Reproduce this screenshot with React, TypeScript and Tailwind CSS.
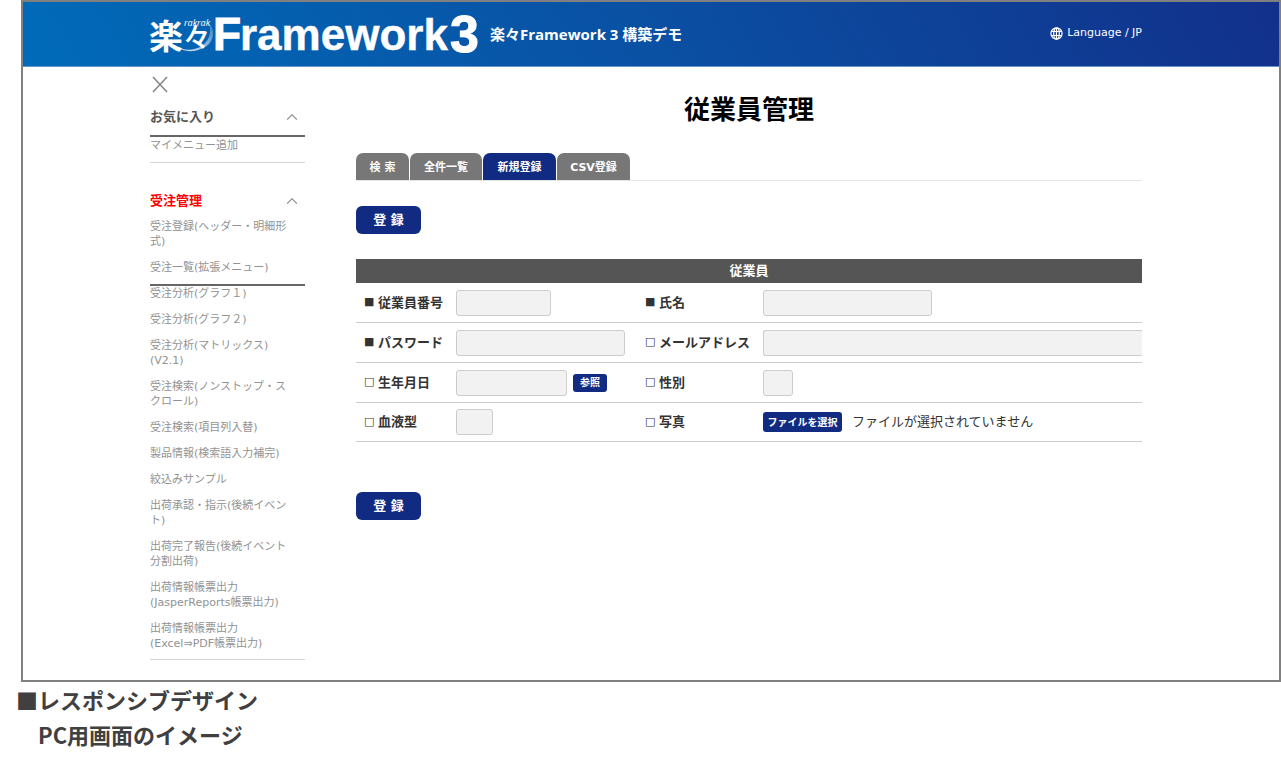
import React from 'react';
import { ChevronUp } from 'lucide-react';

interface MenuSection {
  title: string;
  titleClass: string;
  items: string[];
}

const favorites: MenuSection = {
  title: 'お気に入り',
  titleClass: 'text-[#555555]',
  items: ['マイメニュー追加'],
};

const orders: MenuSection = {
  title: '受注管理',
  titleClass: 'text-[#ff0000]',
  items: ['受注登録(ヘッダー・明細形\n式)', '受注一覧(拡張メニュー)'],
};

const orderTools = [
  '受注分析(グラフ１)',
  '受注分析(グラフ２)',
  '受注分析(マトリックス)\n(V2.1)',
  '受注検索(ノンストップ・ス\nクロール)',
  '受注検索(項目列入替)',
  '製品情報(検索語入力補完)',
  '絞込みサンプル',
  '出荷承認・指示(後続イベン\nト)',
  '出荷完了報告(後続イベント\n分割出荷)',
  '出荷情報帳票出力\n(JasperReports帳票出力)',
  '出荷情報帳票出力\n(Excel⇒PDF帳票出力)',
];

const tabs = [
  { label: '検 索', width: 'w-[53px]', active: false },
  { label: '全件一覧', width: 'w-[72px]', active: false },
  { label: '新規登録', width: 'w-[73px]', active: true },
  { label: 'CSV登録', width: 'w-[73px]', active: false },
];

const fieldClass = 'block h-[26px] rounded-[3px] border border-[#cccccc] bg-[#f2f2f2] px-2 text-[13px] appearance-none';

const Logo = () => (
  <svg width="334" height="60" viewBox="0 0 334 60" role="img" aria-label="楽々Framework3" className="block shrink-0 overflow-visible">
    <defs>
      <linearGradient id="swoosh" x1="0" y1="1" x2="1" y2="0">
        <stop offset="0" stopColor="#ffffff" stopOpacity="0.9" />
        <stop offset="1" stopColor="#ffffff" stopOpacity="0.15" />
      </linearGradient>
    </defs>
    <path d="M27 43 C41 50 58 43 60 29 C61 22 58 18 54 15 C67 22 66 40 51 45 C41 49 33 47 27 43 Z" fill="url(#swoosh)" />
    <g fill="#ffffff">
      <text x="-1" y="45" fontSize="34" fontWeight="700" fontFamily="'Noto Sans CJK JP', sans-serif">楽</text>
      <text x="33" y="44" fontSize="28" fontWeight="500" fontFamily="'Noto Sans CJK JP', sans-serif">々</text>
      <text x="34" y="22" fontSize="9" fontStyle="italic" fontFamily="'Open Sans', sans-serif">rakrak</text>
      <g fontFamily="'Liberation Sans', Arial, sans-serif" fontWeight="700" stroke="#ffffff">
        <text x="63" y="46" fontSize="46" strokeWidth="1">F</text>
        <text x="90" y="46" fontSize="44" strokeWidth="0.4">ramework</text>
        <text x="300" y="48" fontSize="52" strokeWidth="1">3</text>
      </g>
    </g>
  </svg>
);

const GlobeIcon = () => (
  <svg width="13" height="13" viewBox="0 0 13 13" fill="none" stroke="#ffffff" strokeWidth="1.2" aria-hidden="true">
    <circle cx="6.5" cy="6.5" r="5.6" />
    <ellipse cx="6.5" cy="6.5" rx="2.8" ry="5.6" />
    <path d="M1.4 4.5h10.2M1.4 8.5h10.2M6.5 1v11" />
  </svg>
);

const CloseIcon = () => (
  <svg width="20" height="20" viewBox="0 0 20 20" fill="none" stroke="currentColor" strokeWidth="1.6" aria-hidden="true">
    <path d="M3 2l14 15M17 2L3 17" />
  </svg>
);

const MenuTitle = ({ section }: { section: MenuSection }) => (
  <button type="button" className={`flex h-5 w-full items-center justify-between pr-1 text-[13px] font-bold ${section.titleClass}`}>
    {section.title}
    <ChevronUp size={18} strokeWidth={1.6} className="text-[#999999]" />
  </button>
);

const MenuItems = ({ items }: { items: string[] }) => (
  <ul className="flex flex-col gap-[11px]">
    {items.map((item) => (
      <li key={item} className="whitespace-pre text-[11px] leading-[15px] text-[#929292]">
        <a href="#">{item}</a>
      </li>
    ))}
  </ul>
);

const FieldLabel = ({ htmlFor, required, children }: { htmlFor: string; required?: boolean; children: React.ReactNode }) => (
  <th scope="row" className="pl-2 text-left text-[13px] font-bold text-[#333333]">
    <label htmlFor={htmlFor} className="flex items-center gap-[3px] whitespace-nowrap">
      <span className="w-[11px] text-[11px] font-normal">{required ? '■' : '□'}</span>
      {children}
    </label>
  </th>
);

const SubmitButton = () => (
  <button type="submit" className="block h-7 w-[65px] rounded-md bg-[#122b82] text-[13px] font-bold text-white">
    登 録
  </button>
);

const App: React.FC = () => {
  return (
    <div className="min-h-screen bg-white font-['DejaVu_Sans','Noto_Sans_CJK_JP',sans-serif]">
      <div className="ml-[21px] border-2 border-[#808080]">
        <header className="h-[65px] border-b border-[#6a95cc] bg-[linear-gradient(60deg,#006bb9,#0a50a3_50%,#12308b)] pr-[10px]">
          <div className="mx-auto flex h-full max-w-[992px] items-center justify-between">
            <div className="flex items-center gap-[6px]">
              <Logo />
              <p className="font-['Open_Sans','Noto_Sans_CJK_JP',sans-serif] text-[15px] leading-5 font-bold text-white">
                楽々Framework 3 構築デモ
              </p>
            </div>
            <a href="#" className="flex items-center gap-1 pb-0.5 text-[11px] leading-4 text-white">
              <GlobeIcon />
              Language / JP
            </a>
          </div>
        </header>

        <div className="pr-[10px]">
          <div className="mx-auto flex max-w-[992px] gap-[51px] pb-5">
            <nav className="w-[155px] shrink-0 pt-2">
              <button type="button" aria-label="閉じる" className="block text-[#888888]">
                <CloseIcon />
              </button>

              <div className="mt-3 border-b-2 border-[#666666] pb-2">
                <MenuTitle section={favorites} />
              </div>
              <div className="border-b border-[#d5d5d5] pt-px pb-[9px]">
                <MenuItems items={favorites.items} />
              </div>

              <div className="mt-7 border-b-2 border-[#666666] pb-[9px]">
                <MenuTitle section={orders} />
                <div className="pt-2">
                  <MenuItems items={orders.items} />
                </div>
              </div>
              <div className="border-b border-[#d5d5d5] pb-2">
                <MenuItems items={orderTools} />
              </div>
            </nav>

            <main className="min-w-0 flex-1 pt-[25px]">
              <h1 className="text-center text-[26px] leading-9 font-bold text-black">従業員管理</h1>

              <div role="tablist" className="mt-[25px] flex gap-px border-b border-[#e6e6e6]">
                {tabs.map((tab) => (
                  <button
                    key={tab.label}
                    type="button"
                    role="tab"
                    aria-selected={tab.active}
                    className={`h-[27px] rounded-t-[7px] pt-[3px] text-[11px] font-bold text-white ${tab.width} ${tab.active ? 'bg-[#122b82]' : 'bg-[#777777]'}`}
                  >
                    {tab.label}
                  </button>
                ))}
              </div>

              <form className="pt-[25px]" onSubmit={(e) => e.preventDefault()}>
                <SubmitButton />

                <table className="mt-[25px] mb-[50px] w-full table-fixed border-separate border-spacing-0 [&_tbody_td]:border-b [&_tbody_td]:border-[#cccccc] [&_tbody_th]:border-b [&_tbody_th]:border-[#cccccc]">
                  <colgroup>
                    <col className="w-[100px]" />
                    <col className="w-[181px]" />
                    <col className="w-[126px]" />
                    <col />
                  </colgroup>
                  <thead>
                    <tr className="h-6 bg-[#555555]">
                      <th colSpan={4} className="text-center text-[13px] leading-5 font-bold text-white">従業員</th>
                    </tr>
                  </thead>
                  <tbody>
                    <tr className="h-10">
                      <FieldLabel htmlFor="code" required>従業員番号</FieldLabel>
                      <td><input id="code" type="text" className={`w-[95px] ${fieldClass}`} /></td>
                      <FieldLabel htmlFor="name" required>氏名</FieldLabel>
                      <td><input id="name" type="text" className={`w-[169px] ${fieldClass}`} /></td>
                    </tr>
                    <tr className="h-10">
                      <FieldLabel htmlFor="password" required>パスワード</FieldLabel>
                      <td><input id="password" type="password" className={`w-[169px] ${fieldClass}`} /></td>
                      <FieldLabel htmlFor="mail">メールアドレス</FieldLabel>
                      <td className="overflow-hidden">
                        <input id="mail" type="email" className={`w-full rounded-r-none border-r-0 ${fieldClass}`} />
                      </td>
                    </tr>
                    <tr className="h-10">
                      <FieldLabel htmlFor="birthday">生年月日</FieldLabel>
                      <td>
                        <div className="flex items-center gap-[6px]">
                          <input id="birthday" type="text" className={`w-[111px] ${fieldClass}`} />
                          <button type="button" className="h-[18px] w-[34px] rounded-[3px] bg-[#122b82] text-[10px] leading-4 font-bold text-white">
                            参照
                          </button>
                        </div>
                      </td>
                      <FieldLabel htmlFor="gender">性別</FieldLabel>
                      <td>
                        <select id="gender" className={`w-[30px] ${fieldClass}`}>
                          <option value="" />
                        </select>
                      </td>
                    </tr>
                    <tr className="h-[39px]">
                      <FieldLabel htmlFor="blood">血液型</FieldLabel>
                      <td>
                        <select id="blood" className={`w-[37px] ${fieldClass}`}>
                          <option value="" />
                        </select>
                      </td>
                      <FieldLabel htmlFor="photo">写真</FieldLabel>
                      <td>
                        <div className="relative flex items-center gap-[10px]">
                          <input id="photo" type="file" className="sr-only" />
                          <label htmlFor="photo" className="flex h-5 w-[79px] items-center justify-center rounded-[3px] bg-[#122b82] text-[10px] font-bold whitespace-nowrap text-white">
                            ファイルを選択
                          </label>
                          <span className="text-[13px] leading-5 text-[#333333]">ファイルが選択されていません</span>
                        </div>
                      </td>
                    </tr>
                  </tbody>
                </table>

                <SubmitButton />
              </form>
            </main>
          </div>
        </div>
      </div>

      <div className="pl-4 font-['Noto_Sans_CJK_JP',sans-serif] text-[22px] leading-[35px] font-bold text-[#404040]">
        <p>■レスポンシブデザイン</p>
        <p className="pl-[22px]">PC用画面のイメージ</p>
      </div>
    </div>
  );
};

export default App;
